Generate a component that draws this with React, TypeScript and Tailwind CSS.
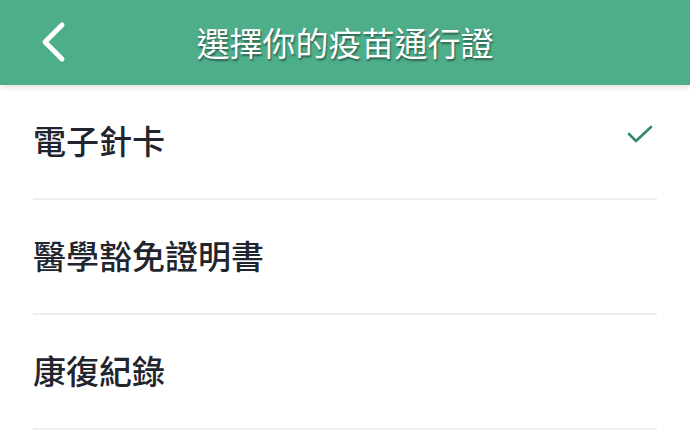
import React from "react";

const items = [
  { label: "電子針卡", selected: true },
  { label: "醫學豁免證明書", selected: false },
  { label: "康復紀錄", selected: false },
];

export default function App() {
  return (
    <div
      className="w-[690px] h-[431px] bg-white overflow-hidden flex flex-col"
      style={{ fontFamily: '"Noto Sans CJK TC", "Noto Sans", sans-serif' }}
    >
      <div className="relative z-10 h-[85px] shrink-0 bg-[#4fae8a] flex items-center justify-center shadow-[0_2px_6px_rgba(0,0,0,0.12)]">
        <button className="absolute left-[38px] top-[21px] w-[30px] h-[42px] flex items-center justify-center">
          <svg width="28" height="42" viewBox="0 0 28 42" fill="none">
            <path d="M23 4 L6 21 L23 38" stroke="white" strokeWidth="5" strokeLinecap="round" strokeLinejoin="round" />
          </svg>
        </button>
        <h1 className="text-white text-[33px] leading-none font-normal [text-shadow:1px_2px_2px_rgba(0,0,0,0.45)]">
          選擇你的疫苗通行證
        </h1>
      </div>
      <div className="flex flex-col px-[33px]">
        {items.map((it) => (
          <div key={it.label} className="h-[115px] flex items-center justify-between border-b-2 border-[#eeeeee]">
            <span className="text-[33px] leading-none text-[#22242e] font-medium -mt-[2px]">{it.label}</span>
            {it.selected && (
              <svg width="26" height="20" viewBox="0 0 26 20" fill="none" className="mr-[4px] -mt-[16px]">
                <path d="M2 10 L9 17 L24 3" stroke="#2f8a68" strokeWidth="2.6" strokeLinecap="round" strokeLinejoin="round" />
              </svg>
            )}
          </div>
        ))}
      </div>
    </div>
  );
}
